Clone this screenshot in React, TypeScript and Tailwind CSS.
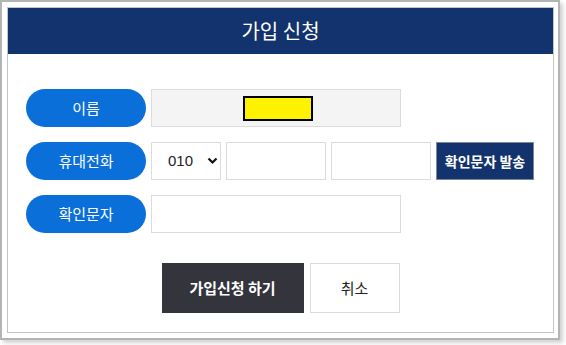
const font = { fontFamily: '"Noto Sans CJK KR", "Noto Sans", sans-serif' };

const Label = ({ text }: { text: string }) => (
	<div className="w-[120px] h-[38px] shrink-0 rounded-full bg-[#0a6fd8] flex items-center justify-center text-white text-[15px]">
		{text}
	</div>
);

const App = () => {
	return (
		<div className="w-[566px] h-[345px] bg-white" style={font}>
			<div className="w-[560px] h-[340px] border-2 border-[#b4b4b4] pt-[5px] pl-[5px] shadow-[3px_3px_4px_rgba(0,0,0,0.18)]">
				<div className="w-[547px] h-[326px] border border-[#c4c4c4] flex flex-col">
					<div className="h-[46px] bg-[#12336d] flex items-center justify-center text-white text-[20px] leading-none">
						가입 신청
					</div>

					<div className="flex flex-col gap-[15px] pl-[18px] pt-[35px]">
						<div className="flex gap-[5px] items-center">
							<Label text="이름" />
							<div className="w-[250px] h-[38px] bg-[#f4f4f4] border border-[#dcdcdc] flex items-center pl-[91px]">
								<div className="w-[70px] h-[25px] bg-[#fff200] border-2 border-black" />
							</div>
						</div>

						<div className="flex items-center">
							<Label text="휴대전화" />
							<div className="ml-[5px] w-[70px] h-[38px] border border-[#dcdcdc] flex items-center pl-[16px] gap-[14px] text-[15px] text-[#222]" style={{ fontFamily: '"Liberation Sans", Arial, sans-serif' }}>
								<span>010</span>
								<svg width="11" height="8" viewBox="0 0 11 8">
									<path d="M1.5 1.5 L5.5 5.5 L9.5 1.5" stroke="#111" strokeWidth="2.2" fill="none" />
								</svg>
							</div>
							<input className="ml-[5px] w-[100px] h-[38px] border border-[#dcdcdc] outline-none" />
							<input className="ml-[5px] w-[100px] h-[38px] border border-[#dcdcdc] outline-none" />
							<button className="ml-[5px] w-[98px] h-[38px] bg-[#12336d] border border-[#7f8795] text-white text-[14px] font-bold">
								확인문자 발송
							</button>
						</div>

						<div className="flex gap-[5px] items-center">
							<Label text="확인문자" />
							<input className="w-[250px] h-[38px] border border-[#dcdcdc] outline-none" />
						</div>
					</div>

					<div className="flex justify-center gap-[6px] mt-[30px]">
						<button className="w-[142px] h-[50px] bg-[#34343c] text-white text-[15px] font-bold">
							가입신청 하기
						</button>
						<button className="w-[90px] h-[50px] bg-white border border-[#dcdcdc] text-[#222] text-[15px]">
							취소
						</button>
					</div>
				</div>
			</div>
		</div>
	);
};

export default App;
